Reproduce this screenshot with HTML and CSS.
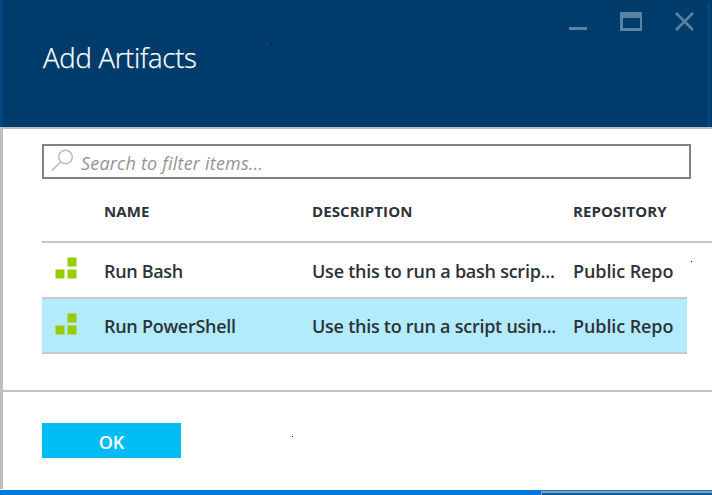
FILE: index.html
```html
<!DOCTYPE html>
<html lang="en">
<head>
<meta charset="utf-8">
<title>Add Artifacts</title>
<link rel="stylesheet" href="styles.css">
</head>
<body>
<div class="blade">
  <header class="header">
    <h1 class="title">Add Artifacts</h1>
    <svg class="controls" width="126" height="20" viewBox="0 0 126 20">
      <path d="M0 17.5h18" stroke="#5c82a2" stroke-width="3"/>
      <path fill="#5c82a2" fill-rule="evenodd" d="M51 1h22v19H51zM54 7v10h17V7z"/>
      <path d="M107 2l17 17M124 2l-17 17" stroke="#5c82a2" stroke-width="2.600"/>
    </svg>
    <i class="edge edge-left"></i>
    <i class="edge edge-right"></i>
    <i class="speck speck-header"></i>
  </header>
  <main class="content">
    <div class="search">
      <svg class="glass" width="24" height="24" viewBox="0 0 24 24" fill="none" stroke="#bcbcbc">
        <circle cx="14.500" cy="8" r="6.800" stroke-width="1.500"/>
        <path d="M9.700 13L1 21.500" stroke-width="1.700"/>
      </svg>
      <span class="placeholder">Search to filter items...</span>
    </div>
    <div class="table">
      <div class="row head"><span></span><span class="h-name">NAME</span><span class="h-desc">DESCRIPTION</span><span class="h-repo">REPOSITORY</span></div>
      <div class="row">
        <svg class="icon" width="22" height="22" viewBox="0 0 22 22"><path fill="#9c0" d="M12.500.5h9v9h-9zM.5 12.500h9v9h-9zM12.500 12.500h9v9h-9z"/></svg>
        <span><b class="t-bash">Run Bash</b></span><span><b class="t-usebash">Use this to run a bash scrip...</b></span><span><b class="t-repo">Public Repo</b></span>
      </div>
      <div class="row selected">
        <svg class="icon" width="22" height="22" viewBox="0 0 22 22"><path fill="#9c0" d="M12.500.5h9v9h-9zM.5 12.500h9v9h-9zM12.500 12.500h9v9h-9z"/></svg>
        <span><b class="t-power">Run PowerShell</b></span><span><b class="t-useps">Use this to run a script usin...</b></span><span><b class="t-repo">Public Repo</b></span>
      </div>
    </div>
    <i class="speck speck-row"></i>
  </main>
  <footer class="footer">
    <button class="ok">OK</button>
    <i class="speck speck-footer"></i>
  </footer>
</div>
<div class="taskbar"><div class="panel"></div></div>
</body>
</html>
```
FILE: styles.css
```css
* { box-sizing: border-box; }
body { margin: 0; width: 712px; height: 495px; overflow: hidden; background: #fff; color: #2d3239; font-family: "Open Sans", "Noto Sans", sans-serif; }
.blade { height: 490px; position: relative; }
.header { height: 129px; position: relative; display: flex; justify-content: space-between; background: #003c6b; border-bottom: 2px solid #bebfc1; padding: 11px 17px 0 43px; }
.title { margin: 28px 0 0; font-size: 27.5px; line-height: 38px; font-weight: 300; color: #fff; letter-spacing: -.25px; -webkit-text-stroke: .25px #fff; white-space: nowrap; }
.edge { position: absolute; background: #004681; width: 3px; top: 0; bottom: 0; }
.edge-left { left: 0; }
.edge-right { right: 2px; top: 2px; }
.speck { position: absolute; width: 1px; height: 1px; background: #000; }
.speck-header { left: 271px; top: 43px; }
.speck-row { left: 688px; top: 132px; }
.speck-footer { left: 289px; top: 44px; }
.content { height: 261px; position: relative; border-left: 3px solid #bebfc1; padding: 15px 0 0 39px; }
.search { width: 649px; height: 35px; border: 2px solid #808184; display: flex; padding-left: 7px; }
.glass { margin-top: 3px; }
.placeholder { margin-left: 6px; font-size: 18px; line-height: 34px; letter-spacing: .2px; font-style: italic; color: #949494; white-space: nowrap; }
.table { width: 670px; }
.row { display: grid; grid-template-columns: 62px 208px 261px 1fr; width: 645px; height: 56px; border-bottom: 2px solid #c8c8c8; font-size: 18px; line-height: 56px; white-space: nowrap; }
.row b { font-weight: 600; }
.row .t-bash { letter-spacing: -.35px; }
.row .t-power { letter-spacing: -.28px; }
.row .t-usebash { letter-spacing: -.25px; }
.row .t-useps { letter-spacing: -.26px; }
.row .t-repo { letter-spacing: -.1px; }
.row.head { width: 670px; height: 64px; font-size: 15px; font-weight: 700; line-height: 65px; letter-spacing: .1px; }
.row.selected { height: 55px; background: #b2ebfb; line-height: 54px; }
.icon { margin: 14px 0 0 13px; }
.footer { height: 99px; position: relative; border-left: 3px solid #bebfc1; border-top: 2px solid #c1c1c3; padding: 31px 0 0 39px; }
.ok { display: block; width: 139px; height: 35px; border: 0; padding: 3px 0 0; background: #00bcf5; color: #fff; font: 600 18px/32px "Open Sans", sans-serif; }
.taskbar { height: 5px; background: #0078dc; padding: 1px 0 0 541px; }
.panel { height: 4px; background: #0064b3; border: solid #999; border-width: 2px 0 0 1px; }
```
